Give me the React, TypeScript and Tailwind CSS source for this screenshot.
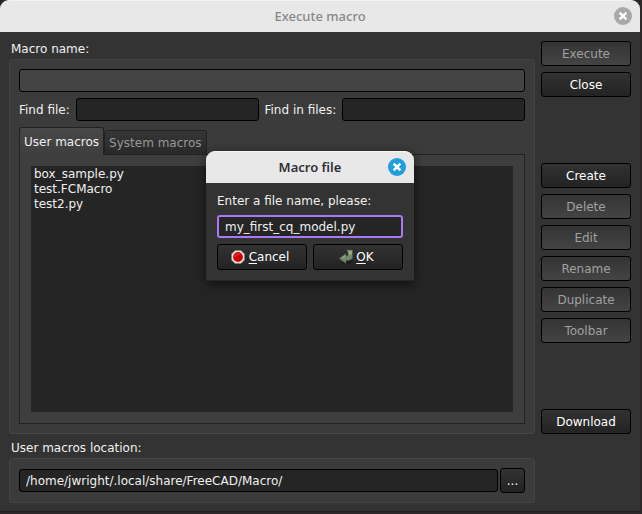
import { useState } from "react";
import type { ReactNode } from "react";

const FIELD =
  "h-[23px] min-w-0 flex-1 rounded-[3px] border border-black bg-[#252525] px-1.5 text-[#f0f0f0] outline-none";

function CloseIcon({ fill }: { fill: string }) {
  return (
    <svg viewBox="0 0 18 18" className="size-[18px]" aria-hidden="true">
      <circle cx="9" cy="9" r="9" fill={fill} />
      <path d="M5.600 5.600l6.800 6.800M12.400 5.600l-6.800 6.800" stroke="#fff" strokeWidth="2.500" />
    </svg>
  );
}

function TitleBar({ title, active }: { title: string; active?: boolean }) {
  return (
    <header className="grid h-8 grid-cols-[34px_1fr_34px] items-center rounded-t-[9px] border-t border-[#f4f4f4] bg-[#e8e8e8] pb-0.5">
      <h1
        className={`col-start-2 text-center font-['Noto_Sans',sans-serif] text-[13px] ${
          active ? "font-semibold text-[#303036]" : "font-medium text-[#87878a]"
        }`}
      >
        {title}
      </h1>
      <button type="button" aria-label={`Close ${title}`} className="flex justify-center">
        <CloseIcon fill={active ? "#1f9ede" : "#a8a8a8"} />
      </button>
    </header>
  );
}

function PushButton({ children, disabled }: { children: ReactNode; disabled?: boolean }) {
  return (
    <button
      type="button"
      disabled={disabled}
      className="flex min-h-[25px] w-full shrink-0 items-center justify-center rounded-[3px] border border-black bg-linear-to-b from-[#323232] to-[#232323] text-white disabled:from-[#343434] disabled:to-[#444444] disabled:text-[#a0a0a0]"
    >
      {children}
    </button>
  );
}

function StopIcon() {
  return (
    <svg viewBox="1 1 14 14" className="size-3.5" aria-hidden="true">
      <path d="M5 1.500h6L14.500 5v6L11 14.500H5L1.500 11V5z" fill="#b9b5b0" stroke="#8c8c88" strokeWidth=".6" />
      <path d="M5.200 2.200h5.600l3 3v5.600l-3 3H5.200l-3-3V5.200z" fill="#eeeeec" />
      <circle cx="8" cy="8" r="4.900" fill="#cc0000" />
      <path d="M4 8a4 4 0 0 1 7-2.600C8.500 5.600 6 7 4.500 9.500z" fill="#dc2020" />
    </svg>
  );
}

function ReturnIcon() {
  return (
    <svg viewBox="0 0 16 16" className="size-4" aria-hidden="true">
      <ellipse cx="9" cy="13.300" rx="5.500" ry="1.800" fill="#1c1c1c" />
      <path
        d="M8.600 1h6v6.500q0 3.700-5 3.900H8v3L1 9.500 8 4.600v2.700q2.400-.1 2.200-2.400-.1-2-1.600-3.900z"
        fill="#75896b"
        stroke="#43543c"
        strokeWidth=".6"
      />
      <path d="M9.800 1.700h4.100v3.500l-3 1q.3-2.200-1.100-4.500zM2.300 9.300L7.300 5.800v2.200z" fill="#98a98d" />
    </svg>
  );
}

function MacroFileDialog() {
  const [name, setName] = useState("my_first_cq_model.py");
  return (
    <div
      role="dialog"
      aria-label="Macro file"
      className="absolute left-[206px] top-[151px] w-[208px] rounded-t-[9px] shadow-[0_3px_12px_rgba(0,0,0,0.6)]"
    >
      <TitleBar title="Macro file" active />
      <form className="border-b border-[#262626] bg-[#333333] px-[11px] py-2.5">
        <label htmlFor="file-name" className="block h-[22px]">
          Enter a file name, please:
        </label>
        <input
          id="file-name"
          value={name}
          onChange={(e) => setName(e.target.value)}
          className="block h-[23px] w-full rounded-[3px] border-2 border-[#ab78f5] bg-[#252525] px-1.5 text-[#f0f0f0] outline-none"
        />
        <div className="mt-1.5 grid h-[26px] grid-cols-2 gap-1.5">
          <PushButton>
            <span className="flex items-center gap-1 pr-1">
              <StopIcon />
              <span>
                <u className="underline-offset-2">C</u>ancel
              </span>
            </span>
          </PushButton>
          <PushButton>
            <span className="flex items-center gap-0.5 pr-1">
              <ReturnIcon />
              <span>
                <u className="underline-offset-2">O</u>K
              </span>
            </span>
          </PushButton>
        </div>
      </form>
    </div>
  );
}

const MACROS = ["box_sample.py", "test.FCMacro", "test2.py"];

export default function App() {
  const [location, setLocation] = useState("/home/jwright/.local/share/FreeCAD/Macro/");
  return (
    <div className="relative flex min-h-screen flex-col bg-[#2a2829] pb-0.5 pr-0.5 font-['DejaVu_Sans',sans-serif] text-[12px] leading-4 text-[#f0f0f0]">
      <TitleBar title="Execute macro" />
      <main className="flex flex-1 gap-1.5 border-b border-[#222222] bg-[#333333] px-[9px] pb-2 pt-[9px]">
        <div className="flex min-w-0 flex-1 flex-col">
          <label htmlFor="macro-name" className="block h-[18px] pl-0.5">
            Macro name:
          </label>
          <section className="flex flex-1 flex-col rounded-[3px] border border-[#454545] bg-[#3b3b3b] p-[9px]">
            <div className="flex">
              <input
                id="macro-name"
                disabled
                className="h-[23px] min-w-0 flex-1 rounded-[3px] border border-black bg-[#444444] px-1.5"
              />
            </div>
            <div className="mt-1.5 flex items-center gap-1.5">
              <label htmlFor="find-file">Find file:</label>
              <input id="find-file" className={FIELD} />
              <label htmlFor="find-in-files">Find in files:</label>
              <input id="find-in-files" className={FIELD} />
            </div>
            <div role="tablist" className="mt-1.5 flex h-[27px] items-end">
              <button
                role="tab"
                type="button"
                aria-selected="true"
                className="relative -mb-px h-7 rounded-t-[3px] border border-b-0 border-[#222222] bg-linear-to-b from-[#484848] to-[#3e3e3e] px-1"
              >
                User macros
              </button>
              <button
                role="tab"
                type="button"
                aria-selected="false"
                className="h-6 rounded-t-[3px] border border-b-0 border-[#222222] bg-linear-to-b from-[#363636] to-[#292929] px-1 text-[#979797]"
              >
                System macros
              </button>
            </div>
            <div role="tabpanel" className="flex flex-1 border border-[#222222] bg-[#3e3e3e] p-[11px]">
              <ul className="flex-1 bg-[#252525] px-[3px] pt-px leading-[15px]">
                {MACROS.map((m) => (
                  <li key={m}>{m}</li>
                ))}
              </ul>
            </div>
          </section>
          <label htmlFor="location" className="mt-1.5 block h-[18px] pl-0.5">
            User macros location:
          </label>
          <section className="flex items-center gap-0.5 rounded-[3px] border border-[#454545] bg-[#3b3b3b] p-[9px]">
            <input
              id="location"
              value={location}
              onChange={(e) => setLocation(e.target.value)}
              className={FIELD}
            />
            <div className="w-[25px]">
              <PushButton>...</PushButton>
            </div>
          </section>
        </div>
        <aside className="flex w-[90px] flex-col gap-1.5">
          <PushButton disabled>Execute</PushButton>
          <PushButton>Close</PushButton>
          <div className="mt-[60px] flex flex-col gap-1.5">
            <PushButton>Create</PushButton>
            <PushButton disabled>Delete</PushButton>
            <PushButton disabled>Edit</PushButton>
            <PushButton disabled>Rename</PushButton>
            <PushButton disabled>Duplicate</PushButton>
            <PushButton disabled>Toolbar</PushButton>
          </div>
          <div className="mb-[69px] mt-auto">
            <PushButton>Download</PushButton>
          </div>
        </aside>
      </main>
      <MacroFileDialog />
    </div>
  );
}
